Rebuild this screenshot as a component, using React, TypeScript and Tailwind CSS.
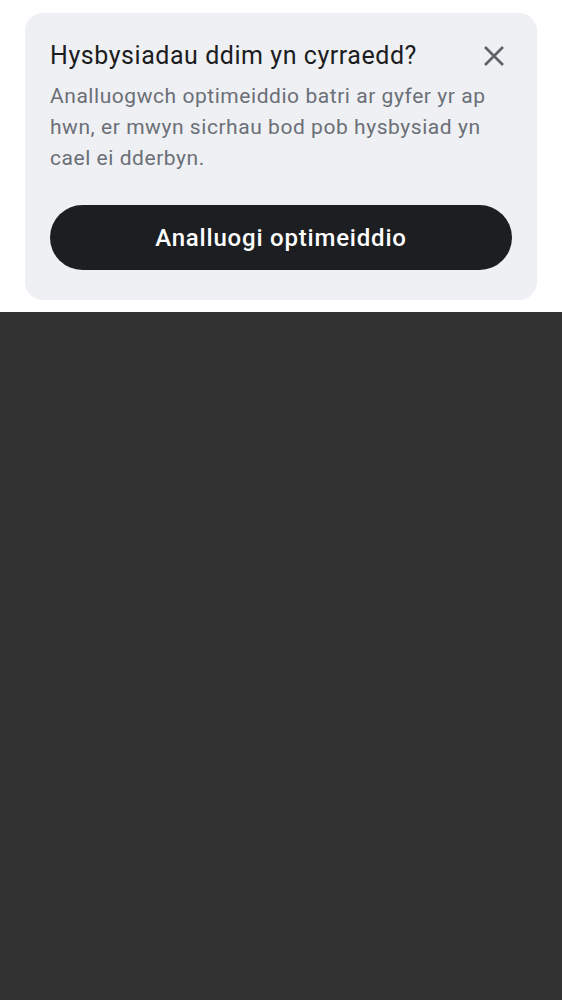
import React from "react";

const CloseIcon = () => (
  <svg width="20" height="20" viewBox="0 0 20 20" fill="none">
    <path d="M1 1L19 19M19 1L1 19" stroke="#5f6368" strokeWidth="2.6" />
  </svg>
);

const App = () => {
  return (
    <div className="flex h-[1000px] w-full flex-col bg-white font-['Roboto',sans-serif]">
      <div className="h-[312px] shrink-0 px-[25px] pt-[13px]">
        <div className="flex flex-col rounded-[18px] bg-[#eff0f4] px-[25px] pt-[28px] pb-[30px]">
          <div className="flex h-[30px] items-center justify-between">
            <h2 className="text-[25px] leading-[30px] tracking-[0.55px] text-[#1c1d21]">
              Hysbysiadau ddim yn cyrraedd?
            </h2>
            <button className="mr-[8px] flex h-[20px] w-[20px] items-center justify-center">
              <CloseIcon />
            </button>
          </div>
          <p className="mt-[10px] text-[21px] leading-[31px] tracking-[0.55px] text-[#6b6f77]">
            Analluogwch optimeiddio batri ar gyfer yr ap hwn, er mwyn sicrhau bod pob hysbysiad yn cael ei dderbyn.
          </p>
          <button className="mt-[31px] h-[65px] w-full rounded-full bg-[#1d1e22] text-[24px] font-medium tracking-[0.8px] text-white">
            Analluogi optimeiddio
          </button>
        </div>
      </div>
      <div className="flex-1 bg-[#313131]" />
    </div>
  );
};

export default App;
